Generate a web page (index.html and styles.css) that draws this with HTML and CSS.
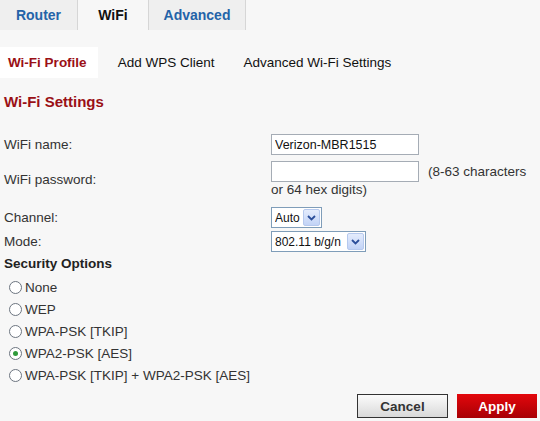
FILE: index.html
```html
<!DOCTYPE html>
<html lang="en">
<head>
  <meta charset="UTF-8" />
  <title>Wi-Fi Settings</title>
  <link rel="stylesheet" href="styles.css">
</head>
<body>
  <div class="tabs">
    <a class="tab">Router</a>
    <a class="tab active">WiFi</a>
    <a class="tab">Advanced</a>
  </div>

  <div class="subtabs">
    <a class="subtab active">Wi-Fi Profile</a>
    <a class="subtab">Add WPS Client</a>
    <a class="subtab">Advanced Wi-Fi Settings</a>
  </div>

  <h2 class="section-title">Wi-Fi Settings</h2>

  <form id="wifiForm">
    <div class="row row-name">
      <label class="row-label">WiFi name:</label>
      <div class="row-field"><input type="text" class="text" value="Verizon-MBR1515" /></div>
    </div>
    <div class="row row-pass">
      <label class="row-label">WiFi password:</label>
      <div class="row-field stacked">
        <div class="pass-line"><input type="password" class="text" /><span class="hint">(8-63 characters</span></div>
        <div class="hint-line">or 64 hex digits)</div>
      </div>
    </div>

    <div class="row row-channel">
      <label class="row-label">Channel:</label>
      <div class="row-field">
        <span class="select-wrap select-auto">
          <select><option>Auto</option></select>
          <span class="arrow"><svg width="9" height="6" viewBox="0 0 9 6"><path d="M1 1 L4.5 4.5 L8 1" fill="none" stroke="#2b4e9a" stroke-width="1.8"/></svg></span>
        </span>
      </div>
    </div>
    <div class="row row-mode">
      <label class="row-label">Mode:</label>
      <div class="row-field">
        <span class="select-wrap select-mode">
          <select><option>802.11 b/g/n</option></select>
          <span class="arrow"><svg width="9" height="6" viewBox="0 0 9 6"><path d="M1 1 L4.5 4.5 L8 1" fill="none" stroke="#2b4e9a" stroke-width="1.8"/></svg></span>
        </span>
      </div>
    </div>

    <div class="group-title">Security Options</div>
    <div class="options">
      <label><input type="radio" name="sec" value="none" /> None</label>
      <label><input type="radio" name="sec" value="wep" /> WEP</label>
      <label><input type="radio" name="sec" value="tkip" /> WPA-PSK [TKIP]</label>
      <label><input type="radio" name="sec" value="aes" checked /> WPA2-PSK [AES]</label>
      <label><input type="radio" name="sec" value="mixed" /> WPA-PSK [TKIP] + WPA2-PSK [AES]</label>
    </div>

    <div class="buttons">
      <button type="button" class="btn cancel">Cancel</button>
      <button type="submit" class="btn apply">Apply</button>
    </div>
  </form>
</body>
</html>
```

FILE: styles.css
```css
body { margin: 0; background: #f7f7f7; font-family: "Liberation Sans", Arial, sans-serif; font-size: 13.5px; color: #333; }

.tabs { display: flex; height: 30px; }
.tab {
  display: flex;
  align-items: center;
  justify-content: center;
  font-size: 14px;
  font-weight: bold;
  color: #2463a8;
  background: #efefef;
  border-right: 1px solid #d6d6d6;
  cursor: pointer;
}
.tab:nth-child(1) { width: 77px; }
.tab:nth-child(2) { width: 70px; }
.tab:nth-child(3) { width: 96px; }
.tab.active { background: #f7f7f7; color: #111; }

.subtabs { display: flex; gap: 12px; margin-top: 17px; height: 31px; }
.subtab { display: flex; align-items: center; padding: 0 9px 0 8px; color: #111; cursor: pointer; }
.subtab.active { background: #fff; color: #9a1016; font-weight: bold; padding-right: 11px; }

.section-title { margin: 15px 0 0 4px; font-size: 15px; line-height: 18px; color: #9a1016; }

#wifiForm { margin-top: 23px; }
.row { display: flex; align-items: center; }
.row-label { width: 267px; padding-left: 4px; }
.row-field { display: flex; align-items: center; }
.row-field.stacked { flex-direction: column; align-items: flex-start; }
.pass-line { display: flex; align-items: center; }
.row-pass { margin-top: 6px; }
.row-channel { margin-top: 10px; }
.row-mode { margin-top: 3px; }

input.text {
  width: 148px;
  height: 21px;
  box-sizing: border-box;
  border: 1px solid #a5acb5;
  background: #fff;
  font: 12.5px "Liberation Sans", Arial, sans-serif;
  color: #111;
  padding: 0 3px;
  margin: 0;
}
.hint { margin-left: 9px; }
.hint-line { line-height: 15px; }

.select-wrap { position: relative; display: inline-block; height: 21px; }
.select-wrap select {
  appearance: none;
  height: 21px;
  box-sizing: border-box;
  border: 1px solid #7f9db9;
  background: #fff;
  font: 12px "Liberation Sans", Arial, sans-serif;
  color: #111;
  padding: 0 0 0 3px;
  margin: 0;
}
.select-auto select { width: 51px; }
.select-mode select { width: 95px; }
/* the little blue arrow button of the old dropdown */
.arrow {
  position: absolute;
  right: 2px;
  top: 2px;
  width: 15px;
  height: 15px;
  border: 1px solid #b6c9ee;
  border-radius: 2px;
  background: linear-gradient(#e4ecfd, #c2d3f6);
  display: flex;
  align-items: center;
  justify-content: center;
  pointer-events: none;
}

.group-title { margin: 4px 0 0 4px; font-weight: bold; line-height: 16px; color: #222; }
.options { margin-top: 4px; }
.options label { display: flex; align-items: center; height: 22px; padding-left: 9px; cursor: pointer; }
.options input[type="radio"] {
  appearance: none;
  width: 13px;
  height: 13px;
  margin: 0 3px 0 0;
  border: 1px solid #6c7580;
  border-radius: 50%;
  background: #fff;
  display: inline-flex;
  align-items: center;
  justify-content: center;
}
.options input[type="radio"]:checked::after {
  content: "";
  width: 5px;
  height: 5px;
  border-radius: 50%;
  background: #2f9a3a;
}

.buttons { display: flex; justify-content: flex-end; gap: 9px; margin: 8px 3px 0 0; }
.btn { height: 24px; font: bold 13.5px "Liberation Sans", Arial, sans-serif; cursor: pointer; }
.cancel { width: 91px; border: 1px solid #333; background: linear-gradient(#fbfbfb, #d9d9d9); color: #333; }
.apply { width: 80px; border: none; background: linear-gradient(#e3070c, #a80005); color: #fff; }
```
